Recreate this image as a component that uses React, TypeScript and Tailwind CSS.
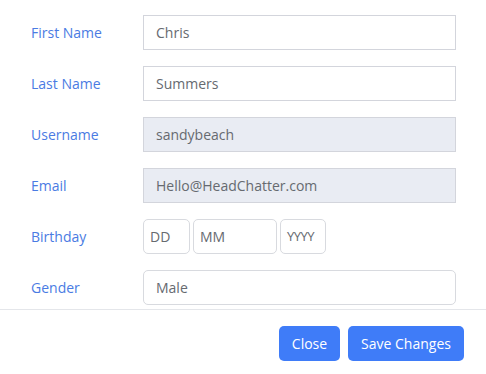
const font = { fontFamily: '"Open Sans", "Noto Sans", sans-serif' };

const rows = [
  { label: 'First Name', value: 'Chris', disabled: false },
  { label: 'Last Name', value: 'Summers', disabled: false },
  { label: 'Username', value: 'sandybeach', disabled: true },
  { label: 'Email', value: 'Hello@HeadChatter.com', disabled: true },
];

const Label = ({ children }: { children: React.ReactNode }) => (
  <div className="w-[112px] shrink-0 text-[14px] text-[#4a7be3]">{children}</div>
);

export default function App() {
  return (
    <div className="w-[486px] h-[374px] bg-white text-[14px]" style={font}>
      <div className="flex flex-col gap-[16px] pt-[15px] pl-[31px] pb-[4px]">
        {rows.map((r) => (
          <div key={r.label} className="flex items-center">
            <Label>{r.label}</Label>
            <div
              className={`w-[313px] h-[35px] flex items-center px-[12px] border border-[#d3d5dc] text-[#666a70] ${
                r.disabled ? 'bg-[#e9ecf3]' : 'bg-white'
              }`}
            >
              {r.value}
            </div>
          </div>
        ))}
        <div className="flex items-center">
          <Label>Birthday</Label>
          <div className="flex gap-[3px]">
            <div className="w-[47px] h-[35px] flex items-center px-[6px] border border-[#d8dadf] rounded-[5px] text-[#666a70]">DD</div>
            <div className="w-[84px] h-[35px] flex items-center px-[6px] border border-[#d8dadf] rounded-[5px] text-[#666a70]">MM</div>
            <div className="w-[46px] h-[35px] flex items-center px-[6px] border border-[#d8dadf] rounded-[5px] text-[13px] tracking-[-0.5px] text-[#666a70]">YYYY</div>
          </div>
        </div>
        <div className="flex items-center">
          <Label>Gender</Label>
          <div className="w-[313px] h-[35px] flex items-center px-[12px] border border-[#d8dadf] rounded-[5px] text-[#666a70]">
            Male
          </div>
        </div>
      </div>
      <div className="border-t border-[#e4e6ea] flex justify-end gap-[8px] pt-[16px] pr-[22px]">
        <button className="w-[61px] h-[35px] rounded-[5px] bg-[#3f7cf8] text-white text-[14px]">Close</button>
        <button className="w-[116px] h-[35px] rounded-[5px] bg-[#3f7cf8] text-white text-[14px]">Save Changes</button>
      </div>
    </div>
  );
}
